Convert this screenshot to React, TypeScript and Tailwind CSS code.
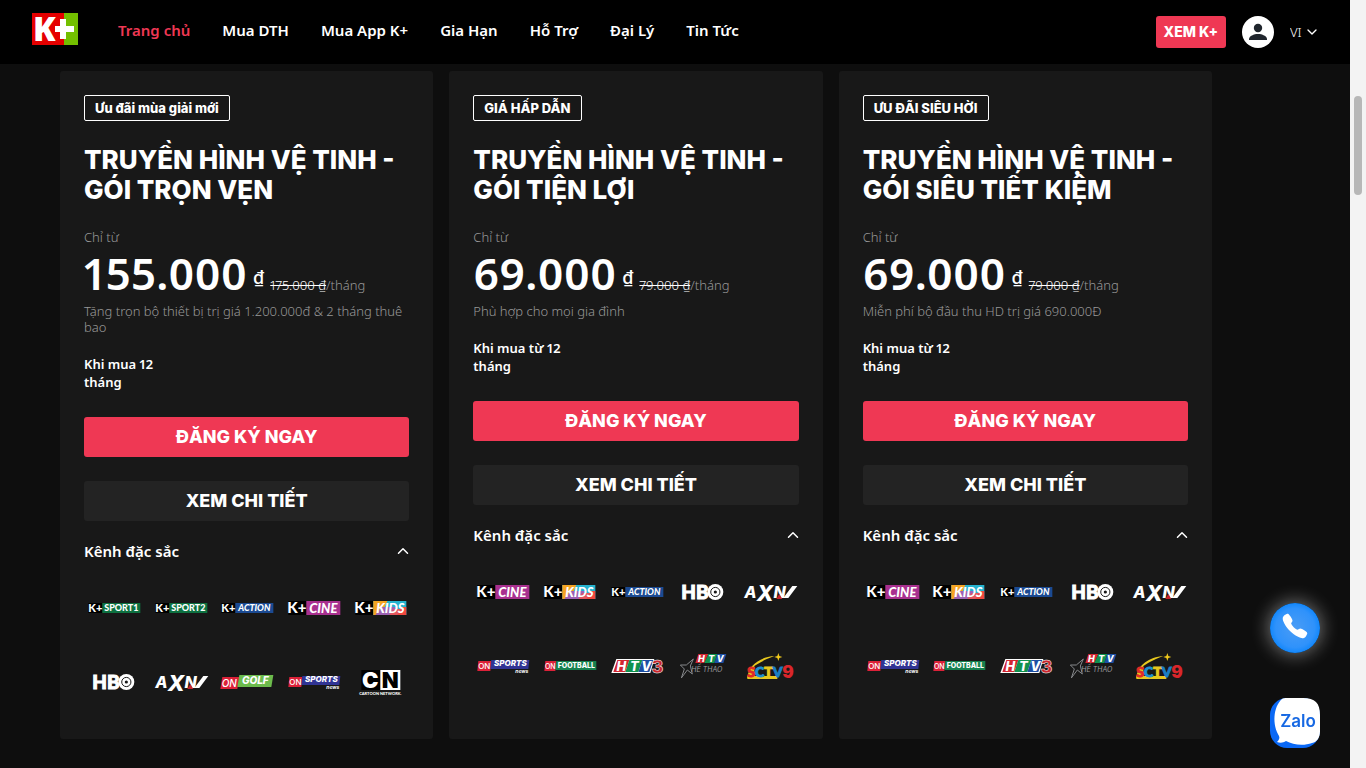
import React from "react";
import { ChevronDown, ChevronUp } from "lucide-react";
import { IoCall } from "react-icons/io5";

type Channel =
  | "sport1"
  | "sport2"
  | "action"
  | "cine"
  | "kids"
  | "hbo"
  | "axn"
  | "golf"
  | "sportsnews"
  | "cn"
  | "football"
  | "htv3"
  | "htvthethao"
  | "sctv9";

interface Plan {
  badge: string;
  title: string;
  price: string;
  oldPrice: string;
  note: string;
  term: string;
  channels: Channel[];
}

const plans: Plan[] = [
  {
    badge: "Ưu đãi mùa giải mới",
    title: "TRUYỀN HÌNH VỆ TINH - GÓI TRỌN VẸN",
    price: "155.000",
    oldPrice: "175.000 ₫",
    note: "Tặng trọn bộ thiết bị trị giá 1.200.000đ & 2 tháng thuê bao",
    term: "Khi mua 12 tháng",
    channels: ["sport1", "sport2", "action", "cine", "kids", "hbo", "axn", "golf", "sportsnews", "cn"],
  },
  {
    badge: "GIÁ HẤP DẪN",
    title: "TRUYỀN HÌNH VỆ TINH - GÓI TIỆN LỢI",
    price: "69.000",
    oldPrice: "79.000 ₫",
    note: "Phù hợp cho mọi gia đình",
    term: "Khi mua từ 12 tháng",
    channels: ["cine", "kids", "action", "hbo", "axn", "sportsnews", "football", "htv3", "htvthethao", "sctv9"],
  },
  {
    badge: "ƯU ĐÃI SIÊU HỜI",
    title: "TRUYỀN HÌNH VỆ TINH - GÓI SIÊU TIẾT KIỆM",
    price: "69.000",
    oldPrice: "79.000 ₫",
    note: "Miễn phí bộ đầu thu HD trị giá 690.000Đ",
    term: "Khi mua từ 12 tháng",
    channels: ["cine", "kids", "action", "hbo", "axn", "sportsnews", "football", "htv3", "htvthethao", "sctv9"],
  },
];

const navItems = ["Trang chủ", "Mua DTH", "Mua App K+", "Gia Hạn", "Hỗ Trợ", "Đại Lý", "Tin Tức"];

const lato = "Lato, sans-serif";
const inter = "Inter, sans-serif";

function SmallKPlus({ color, label, italic }: { color: string; label: string; italic?: boolean }) {
  return (
    <>
      <rect x="4" y="20" width="14" height="10" fill="#000" />
      <rect x="18" y="20" width="38" height="10" fill={color} />
      <text x="4" y="29" fontFamily={lato} fontWeight="900" fontSize="11" fill="#fff">K+</text>
      <text x="37" y="28" textAnchor="middle" fontFamily={lato} fontWeight="900" fontStyle={italic ? "italic" : "normal"} fontSize="9" fill="#fff">{label}</text>
    </>
  );
}

function BigKPlus({ children, label }: { children: React.ReactNode; label: string }) {
  return (
    <>
      <rect x="4" y="18" width="18" height="14" fill="#000" />
      {children}
      <text x="3" y="30" fontFamily={lato} fontWeight="900" fontSize="15" fill="#fff">K+</text>
      <text x="39" y="30" textAnchor="middle" fontFamily={lato} fontWeight="900" fontStyle="italic" fontSize="13" fill="#fff">{label}</text>
    </>
  );
}

function ChannelArt({ name }: { name: Channel }) {
  switch (name) {
    case "sport1":
      return <SmallKPlus color="#0d7140" label="SPORT1" />;
    case "sport2":
      return <SmallKPlus color="#0d7140" label="SPORT2" />;
    case "action":
      return <SmallKPlus color="#1b4a92" label="ACTION" italic />;
    case "cine":
      return (
        <BigKPlus label="CINE">
          <rect x="22" y="18" width="34" height="14" fill="#a8308f" />
        </BigKPlus>
      );
    case "kids":
      return (
        <BigKPlus label="KIDS">
          <rect x="22" y="18" width="33" height="14" fill="#25b3cf" />
          <path d="M22 18 H36 L30 32 H22 Z" fill="#f5a422" />
          <path d="M30 24 L45 24 L40 32 H24 Z" fill="#9c62b3" />
          <path d="M45 32 L50 24 H55 V32 Z" fill="#f0483e" />
          <path d="M38 32 L42 26 H50 L46 32 Z" fill="#e2575f" />
        </BigKPlus>
      );
    case "hbo":
      return (
        <>
          <text x="8" y="32" fontFamily={lato} fontWeight="900" fontSize="19" fill="#fff" stroke="#fff" strokeWidth="1">HB</text>
          <circle cx="42" cy="25" r="8" fill="#fff" />
          <circle cx="42" cy="25" r="4.6" fill="none" stroke="#181818" strokeWidth="1" />
          <circle cx="42" cy="25" r="1.6" fill="#181818" />
        </>
      );
    case "axn":
      return (
        <>
          <text x="4" y="31" fontFamily={inter} fontWeight="800" fontStyle="italic" fontSize="16" fill="#fff">
            A<tspan fontSize="22" dy="3">X</tspan><tspan dy="-3">N</tspan>
          </text>
          <path d="M43 31 L48 31 L57 19 L52 19 Z" fill="#fff" />
          <path d="M36 32 L39 27 L42 32 Z" fill="#c8242b" />
        </>
      );
    case "golf":
      return (
        <>
          <path d="M5 20 H22 L20 32 H3 Z" fill="#dc2138" />
          <path d="M22 18 H56 L54 30 H20 Z" fill="#6cbb4c" />
          <text x="12" y="30" textAnchor="middle" fontFamily={inter} fontWeight="500" fontStyle="italic" fontSize="10" fill="#fff">ON</text>
          <text x="38" y="27" textAnchor="middle" fontFamily={inter} fontWeight="800" fontStyle="italic" fontSize="10" fill="#fff">GOLF</text>
        </>
      );
    case "sportsnews":
      return (
        <>
          <path d="M5 20 H18 L17 30 H4 Z" fill="#dc2138" />
          <path d="M18 19 H56 L55 28 H17 Z" fill="#303494" />
          <text x="11" y="28" textAnchor="middle" fontFamily={inter} fontWeight="500" fontSize="8" fill="#fff">ON</text>
          <text x="37" y="25" textAnchor="middle" fontFamily={inter} fontWeight="800" fontStyle="italic" fontSize="8" fill="#fff">SPORTS</text>
          <text x="55" y="32" textAnchor="end" fontFamily={inter} fontWeight="700" fontStyle="italic" fontSize="5" fill="#fff">news</text>
        </>
      );
    case "football":
      return (
        <>
          <path d="M5 20 H16 L15 30 H4 Z" fill="#dc2138" />
          <path d="M16 20 H56 V29 H15 Z" fill="#17814f" />
          <text x="10" y="28" textAnchor="middle" fontFamily={inter} fontWeight="500" fontSize="7" fill="#fff">ON</text>
          <text x="36" y="27" textAnchor="middle" fontFamily={inter} fontWeight="800" fontSize="7" fill="#fff">FOOTBALL</text>
        </>
      );
    case "cn":
      return (
        <>
          <rect x="10" y="13" width="19" height="20" fill="#000" />
          <rect x="29" y="13" width="20" height="20" fill="#fff" />
          <text x="19" y="31" textAnchor="middle" fontFamily={inter} fontWeight="900" fontSize="22" fill="#fff">C</text>
          <text x="39" y="31" textAnchor="middle" fontFamily={inter} fontWeight="900" fontSize="22" fill="#000">N</text>
          <text x="29" y="38" textAnchor="middle" fontFamily={lato} fontWeight="900" fontSize="4" fill="#fff">CARTOON NETWORK.</text>
        </>
      );
    case "htv3":
      return (
        <>
          <path d="M9 18 H47 L43 32 H4 Z" fill="#fff" />
          <path d="M10 19 H22 L18 31 H6 Z" fill="#d22630" />
          <path d="M22 19 H35 L31 31 H18 Z" fill="#10924f" />
          <path d="M35 19 H46 L42 31 H31 Z" fill="#1d4fa3" />
          <text x="14" y="30" textAnchor="middle" fontFamily={inter} fontWeight="800" fontStyle="italic" fontSize="13" fill="#fff">H</text>
          <text x="27" y="30" textAnchor="middle" fontFamily={inter} fontWeight="800" fontStyle="italic" fontSize="13" fill="#fff">T</text>
          <text x="39" y="30" textAnchor="middle" fontFamily={inter} fontWeight="800" fontStyle="italic" fontSize="13" fill="#fff">V</text>
          <text x="50" y="32" textAnchor="middle" fontFamily={inter} fontWeight="800" fontSize="18" fill="#c9252d" stroke="#fff" strokeWidth="0.5">3</text>
        </>
      );
    case "htvthethao":
      return (
        <>
          <path d="M25 13 H35 L31 22 H22 Z" fill="#d22630" />
          <path d="M35 13 H44 L41 22 H31 Z" fill="#10924f" />
          <path d="M44 13 H53 L50 22 H41 Z" fill="#1d4fa3" />
          <text y="21" textAnchor="middle" fontFamily={inter} fontWeight="800" fontStyle="italic" fontSize="9" fill="#fff">
            <tspan x="28">H</tspan><tspan x="38">T</tspan><tspan x="47">V</tspan>
          </text>
          <path d="M7 24 L13 24 L20 18 L17 25 L19 33 L14 29 L8 37 L11 28 Z" fill="none" stroke="#85878a" strokeWidth="1" />
          <text x="18" y="31" fontFamily={inter} fontWeight="400" fontStyle="italic" fontSize="7" fill="#9a9c9f">HẾ THAO</text>
        </>
      );
    case "sctv9":
      return (
        <>
          <path d="M7 37 C8 24 20 16 34 15 C23 19 17 23 14 25 V37 Z" fill="#e8c81d" />
          <path d="M38 12 L39 15 L42 16 L39 17 L38 20 L37 17 L34 16 L37 15 Z" fill="#f1c91b" />
          <rect x="7" y="35" width="30" height="3" fill="#e8c81d" />
          <text x="7" y="36" fontFamily={lato} fontWeight="900" fontSize="14" strokeWidth="1">
            <tspan fill="#e02b27" stroke="#e02b27">S</tspan>
            <tspan fill="#1f8fd0" stroke="#1f8fd0">C</tspan>
            <tspan fill="#e8c81d" stroke="#e8c81d">T</tspan>
            <tspan fill="#1b7fc4" stroke="#1b7fc4">V</tspan>
          </text>
          <text x="42" y="37" fontFamily={inter} fontWeight="900" fontSize="17" fill="#d9262b">9</text>
        </>
      );
  }
}

function ChannelLogo({ name }: { name: Channel }) {
  return (
    <svg viewBox="0 0 58 50" className="h-[50px] w-full overflow-visible" aria-hidden="true">
      <ChannelArt name={name} />
    </svg>
  );
}

function BrandLogo() {
  return (
    <svg viewBox="0 0 46 32" className="h-8 w-[46px] overflow-visible" aria-hidden="true">
      <rect width="32" height="32" fill="#e50000" />
      <rect x="32" width="14" height="32" fill="#73bf00" />
      <text x="1" y="28" fontFamily="'Noto Sans', sans-serif" fontWeight="900" fontSize="33" fill="#fff">K</text>
      <path d="M31 6 V26 M23 16 H42" stroke="#fff" strokeWidth="6" fill="none" />
    </svg>
  );
}

function Header() {
  return (
    <header className="flex h-16 items-center justify-between bg-black px-8">
      <div className="flex items-center">
        <a href="#" className="mr-10 block pb-1.5" aria-label="K+">
          <BrandLogo />
        </a>
        <nav className="flex gap-8 pb-1 text-[15px] font-semibold leading-6">
          {navItems.map((item, i) => (
            <a key={item} href="#" className={i === 0 ? "text-[#ef3854]" : "text-white"}>
              {item}
            </a>
          ))}
        </nav>
      </div>
      <div className="flex items-center gap-4">
        <button className="h-8 rounded-[3px] bg-[#ef3854] px-2 font-[Inter,sans-serif] text-sm font-extrabold">XEM K+</button>
        <button aria-label="Tài khoản" className="size-8 rounded-full bg-white">
          <svg viewBox="0 0 32 32" className="size-8" fill="#20262d" aria-hidden="true">
            <circle cx="16" cy="12" r="4.200" />
            <path d="M7 24 V23 C7 20 12 18 16 18 S25 20 25 23 V24 Z" />
          </svg>
        </button>
        <label className="flex items-center">
          <select aria-label="Ngôn ngữ" className="w-[14px] appearance-none bg-transparent text-[13px] font-light leading-5 text-white outline-none">
            <option>VI</option>
            <option>EN</option>
          </select>
          <ChevronDown className="-mr-0.5 size-4" strokeWidth={2} />
        </label>
      </div>
    </header>
  );
}

function PlanCard({ plan }: { plan: Plan }) {
  return (
    <article className="rounded-[3px] bg-[#181818] px-6 pt-6 pb-8">
      <span className="block w-fit rounded-[2px] border border-white px-2.5 font-[Inter,sans-serif] text-[13px] leading-6 font-extrabold">
        {plan.badge}
      </span>
      <h2 className="mt-6 font-[Inter,sans-serif] text-[26px] leading-[30px] font-extrabold">{plan.title}</h2>
      <p className="mt-6 text-[13px] leading-4 font-light text-[#999999]">Chỉ từ</p>
      <div className="mt-1 flex h-12 items-baseline leading-[48px] proportional-nums">
        <strong className="text-[44px] font-semibold">{plan.price}</strong>
        <span className="mt-2 ml-1.5 self-center text-lg leading-6 font-medium">₫</span>
        <span className="ml-1.5 text-[13px] font-light">
          <s>{plan.oldPrice}</s>
          <span className="text-[#999999]">/tháng</span>
        </span>
      </div>
      <p className="mt-1.5 text-[13px] leading-4 font-light text-[#999999]">{plan.note}</p>
      <p className="mt-5 w-[100px] text-[13px] leading-[18px] font-semibold proportional-nums">{plan.term}</p>
      <button className="mt-[26px] h-10 w-full rounded-[3px] bg-[#ef3854] font-[Inter,sans-serif] text-lg font-extrabold">
        ĐĂNG KÝ NGAY
      </button>
      <button className="mt-6 h-10 w-full rounded-[3px] bg-[#232323] font-[Inter,sans-serif] text-lg font-extrabold">
        XEM CHI TIẾT
      </button>
      <button className="mt-[18px] flex h-6 w-full items-center justify-between text-[15px] font-semibold">
        <span>Kênh đặc sắc</span>
        <ChevronUp className="-mr-[3px] size-[18px]" />
      </button>
      <div className="mt-5 grid grid-cols-5 gap-x-2 gap-y-6">
        {plan.channels.map((c) => (
          <ChannelLogo key={c} name={c} />
        ))}
      </div>
    </article>
  );
}

function FloatingContacts() {
  return (
    <div className="fixed right-[46px] bottom-5 flex flex-col gap-[45px]">
      <a
        href="tel:19001592"
        aria-label="Gọi điện"
        className="flex size-[50px] items-center justify-center rounded-full bg-[radial-gradient(circle,#4a9cf5_0%,#2f92fb_55%,#0a84fb_75%)] pb-1 shadow-[0_0_18px_2px_rgba(255,255,255,0.4)]"
      >
        <IoCall className="size-7" />
      </a>
      <a href="#zalo" aria-label="Zalo" className="block">
        <svg viewBox="0 0 50 50" className="size-[50px]" aria-hidden="true">
          <rect width="50" height="50" rx="17" fill="#0a68f5" />
          <path d="M17 0 H33 C45 0 50 5 50 17 V33 C50 40 47 44 42 45 C34 48 23 47 16 43 C13 45 10 45 7 44 C9 42 10 40 9 38 C2 27 3 9 12 1 C13 0 15 0 17 0 Z" fill="#fff" />
          <text x="28" y="29" textAnchor="middle" fontFamily={inter} fontWeight="600" fontSize="17" fill="#1668e3">Zalo</text>
        </svg>
      </a>
    </div>
  );
}

export default function App() {
  return (
    <div className="flex min-h-screen bg-[#0e0e0e] font-['Noto_Sans',sans-serif] text-white">
      <div className="min-w-0 flex-1">
        <Header />
        <main className="px-[60px] pt-[7px] pb-7">
          <div className="grid max-w-6xl grid-cols-3 gap-4">
            {plans.map((plan) => (
              <PlanCard key={plan.badge} plan={plan} />
            ))}
          </div>
        </main>
      </div>
      <div className="w-4 bg-[#f3f3f3] px-1 pt-24" aria-hidden="true">
        <div className="h-[99px] rounded-full bg-[#b7b7b7]" />
      </div>
      <FloatingContacts />
    </div>
  );
}
